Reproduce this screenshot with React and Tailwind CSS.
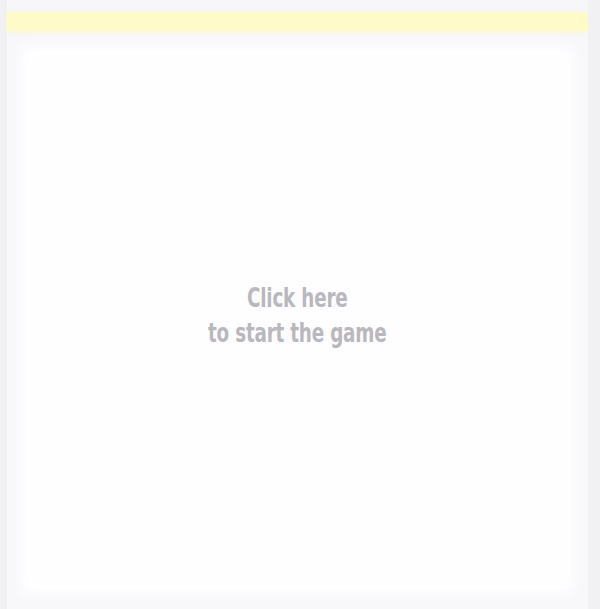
import React from 'react'

export default function App() {
  return (
    <div className="h-[609px] w-[600px] overflow-hidden bg-[#f1f0f3] pl-[7px] pr-[12px]">
      <div className="flex h-full flex-col bg-[#f8f7fa]">
        <div className="h-[12px] bg-[#f7f6f9]" />
        {/* top bar */}
        <div className="h-[19px] bg-[#fffbc8] shadow-[0_2px_4px_rgba(255,250,200,0.6)]" />
        <div className="flex flex-1 flex-col px-[18px] pt-[19px] pb-[19px]">
          <div className="flex flex-1 cursor-pointer items-center justify-center rounded-md bg-[#fefdff] pb-[10px] shadow-[0_0_12px_6px_rgba(254,253,255,0.9)]">
            {/* condensed headline: no condensed face installed, so squeeze horizontally */}
            <div className="inline-block scale-x-[0.68] text-center font-['DejaVu_Sans',sans-serif] text-[27px] font-bold leading-[35px] tracking-[-0.3px] text-[#b9b8bd]">
              Click here
              <br />
              to start the game
            </div>
          </div>
        </div>
      </div>
    </div>
  )
}
